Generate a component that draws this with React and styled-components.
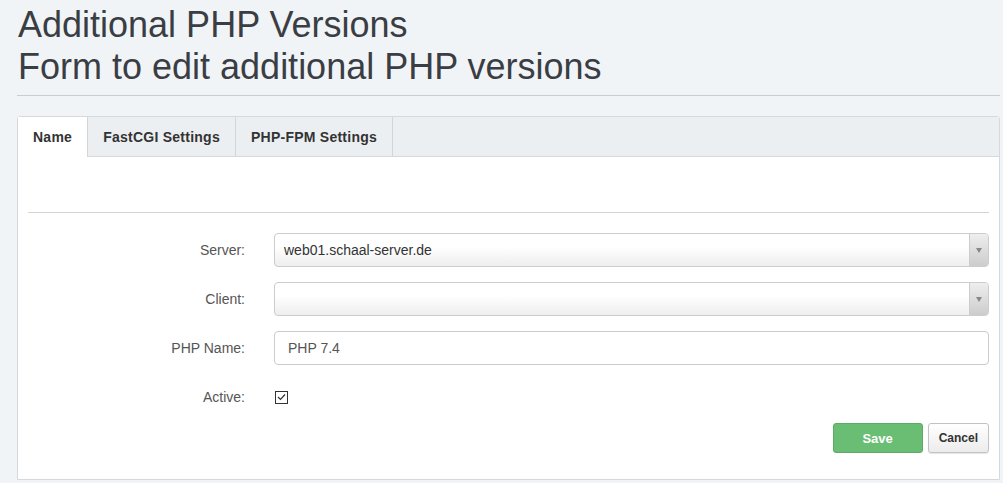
import React from "react";
import styled, { createGlobalStyle } from "styled-components";

const GlobalStyle = createGlobalStyle`
  html, body {
    margin: 0;
    padding: 0;
    background: #f1f4f7;
    font-family: "Liberation Sans", Arial, sans-serif;
    color: #333;
  }
`;

const Page = styled.div`
  padding: 4px 3px 0 18px;
  width: 1003px;
  box-sizing: border-box;
`;

const Title = styled.h1`
  margin: 0;
  font-size: 36px;
  line-height: 42px;
  font-weight: normal;
  color: #3a3e44;
`;

const Rule = styled.div`
  height: 1px;
  background: #c9ccd0;
  margin: 7px 0 20px -1px;
`;

const Panel = styled.div`
  background: #fff;
  border: 1px solid #d6d9dc;
  border-radius: 3px 3px 0 0;
  margin-left: -1px;
`;

const TabBar = styled.div`
  display: flex;
  height: 39px;
  background: #eceff2;
  border-bottom: 1px solid #d6d9dc;
`;

const Tab = styled.div`
  display: flex;
  align-items: center;
  padding: 0 15px;
  font-size: 14px;
  font-weight: bold;
  letter-spacing: 0.25px;
  color: #333;
  background: ${(p) => (p.$active ? "#fff" : "transparent")};
  border-right: 1px solid #d3d6d9;
  margin-bottom: ${(p) => (p.$active ? "-1px" : "0")};
`;

const Body = styled.div`
  padding: 0 10px 26px 10px;
`;

const Divider = styled.div`
  height: 1px;
  background: #d2d4d6;
  margin: 55px 0 20px 0;
`;

const Form = styled.div`
  display: grid;
  grid-template-columns: 217px 1fr;
  column-gap: 29px;
  row-gap: 15px;
  align-items: center;
`;

const Label = styled.div`
  text-align: right;
  font-size: 14px;
  color: #555;
`;

const Select = styled.div`
  position: relative;
  height: 34px;
  box-sizing: border-box;
  border: 1px solid #ccc;
  border-radius: 4px;
  background: linear-gradient(#fff 40%, #eee);
  display: flex;
  align-items: center;
  padding-left: 9px;
  font-size: 14px;
  color: #333;
`;

const Arrow = styled.div`
  position: absolute;
  right: 0;
  top: 0;
  bottom: 0;
  width: 18px;
  border-left: 1px solid #ccc;
  border-radius: 0 3px 3px 0;
  background: linear-gradient(#eee, #ccc);
  display: flex;
  align-items: center;
  justify-content: center;

  &::after {
    content: "";
    border-left: 3px solid transparent;
    border-right: 3px solid transparent;
    border-top: 5px solid #888;
  }
`;

const Input = styled.div`
  height: 34px;
  box-sizing: border-box;
  border: 1px solid #ccc;
  border-radius: 4px;
  background: #fff;
  display: flex;
  align-items: center;
  padding-left: 13px;
  font-size: 14px;
  color: #555;
`;

const CheckRow = styled.div`
  height: 34px;
  display: flex;
  align-items: center;
  padding-left: 1px;
`;

const Check = styled.span`
  width: 13px;
  height: 13px;
  box-sizing: border-box;
  border: 1px solid #333;
  display: flex;
  align-items: center;
  justify-content: center;
  background: #fff;
`;

const Actions = styled.div`
  display: flex;
  justify-content: flex-end;
  gap: 5px;
  margin-top: 9px;
`;

const Button = styled.div`
  height: 30px;
  box-sizing: border-box;
  display: flex;
  align-items: center;
  justify-content: center;
  border-radius: 3px;
  font-size: ${(p) => (p.$primary ? "13px" : "12px")};
  font-weight: bold;
  padding: 0 10px;
  min-width: ${(p) => p.$width || "auto"};
  color: ${(p) => (p.$primary ? "#fff" : "#333")};
  background: ${(p) =>
    p.$primary ? "#69be74" : "linear-gradient(#fff, #ececec)"};
  border: 1px solid ${(p) => (p.$primary ? "#5aab65" : "#c2c2c2")};
  box-shadow: ${(p) => (p.$primary ? "none" : "0 1px 1px rgba(0,0,0,0.1)")};
`;

export default function App() {
  return (
    <>
      <GlobalStyle />
      <Page>
        <Title>
          Additional PHP Versions
          <br />
          Form to edit additional PHP versions
        </Title>
        <Rule />
        <Panel>
          <TabBar>
            <Tab $active>Name</Tab>
            <Tab>FastCGI Settings</Tab>
            <Tab>PHP-FPM Settings</Tab>
          </TabBar>
          <Body>
            <Divider />
            <Form>
              <Label>Server:</Label>
              <Select>
                web01.schaal-server.de
                <Arrow />
              </Select>
              <Label>Client:</Label>
              <Select>
                <Arrow />
              </Select>
              <Label>PHP Name:</Label>
              <Input>PHP 7.4</Input>
              <Label>Active:</Label>
              <CheckRow>
                <Check>
                  <svg width="9" height="8" viewBox="0 0 9 8">
                    <path d="M1 4 L3.5 6.5 L8 1.5" fill="none" stroke="#333" strokeWidth="1.2" />
                  </svg>
                </Check>
              </CheckRow>
            </Form>
            <Actions>
              <Button $primary $width="90px">Save</Button>
              <Button>Cancel</Button>
            </Actions>
          </Body>
        </Panel>
      </Page>
    </>
  );
}
